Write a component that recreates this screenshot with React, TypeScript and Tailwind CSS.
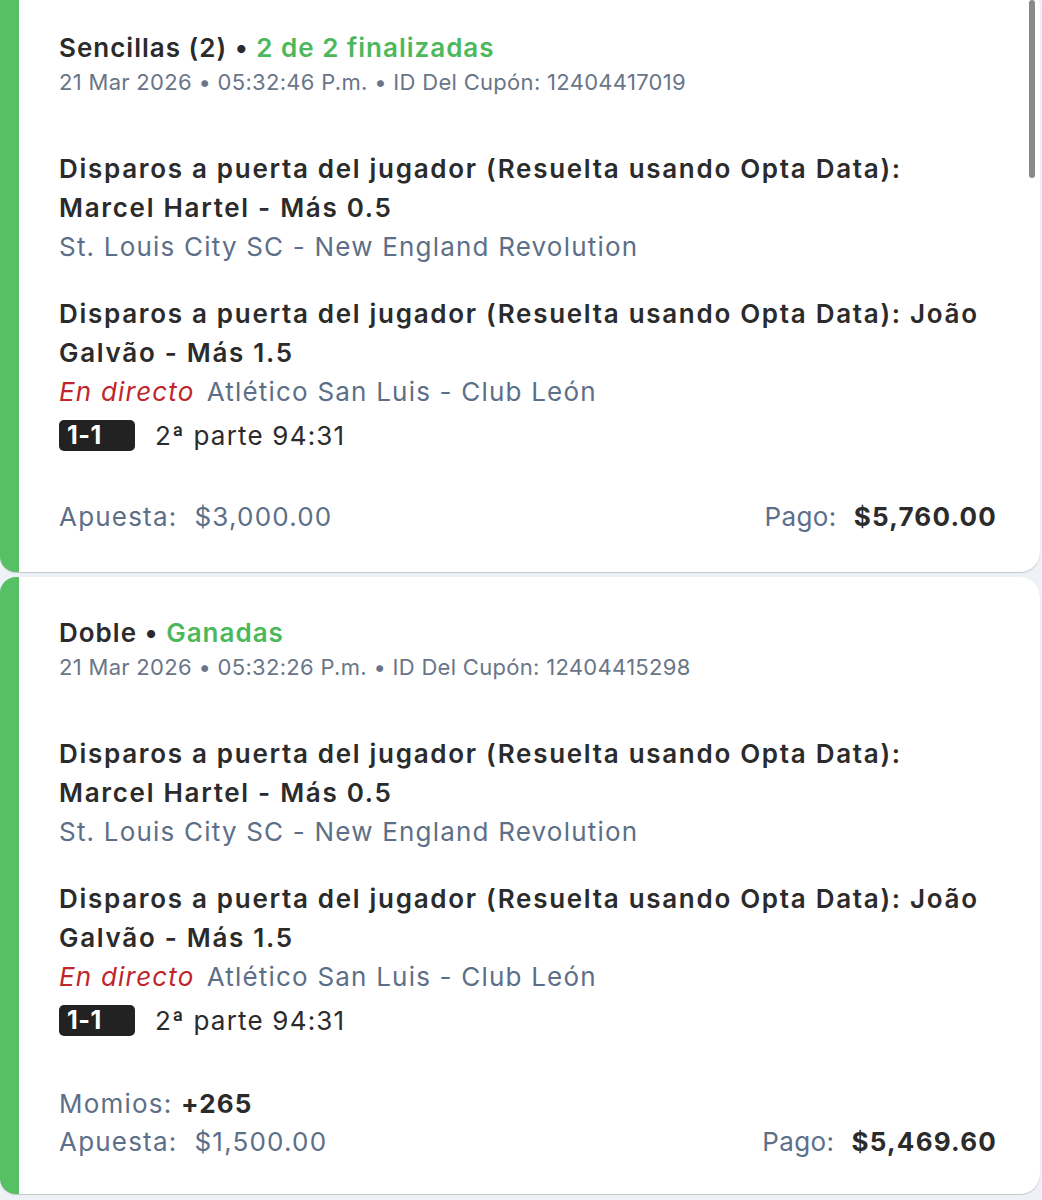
import React from "react";

type Leg = {
  title: string;
  match: string;
  live?: boolean;
  score?: string;
  period?: string;
};

type Coupon = {
  kind: string;
  status: string;
  date: string;
  couponId: string;
  legs: Leg[];
  odds?: string;
  stake: string;
  payout: string;
};

const legs: Leg[] = [
  {
    title: "Disparos a puerta del jugador (Resuelta usando Opta Data): Marcel Hartel - Más 0.5",
    match: "St. Louis City SC - New England Revolution",
  },
  {
    title: "Disparos a puerta del jugador (Resuelta usando Opta Data): João Galvão - Más 1.5",
    match: "Atlético San Luis - Club León",
    live: true,
    score: "1-1",
    period: "2ª parte 94:31",
  },
];

const coupons: Coupon[] = [
  {
    kind: "Sencillas (2)",
    status: "2 de 2 finalizadas",
    date: "21 Mar 2026 • 05:32:46 P.m.",
    couponId: "12404417019",
    legs,
    stake: "$3,000.00",
    payout: "$5,760.00",
  },
  {
    kind: "Doble",
    status: "Ganadas",
    date: "21 Mar 2026 • 05:32:26 P.m.",
    couponId: "12404415298",
    legs,
    odds: "+265",
    stake: "$1,500.00",
    payout: "$5,469.60",
  },
];

function LegRow({ leg }: { leg: Leg }) {
  return (
    <div className="flex flex-col">
      <p className="text-[26px] font-semibold leading-[39px] tracking-[1.7px] text-[#2b2b2b]">{leg.title}</p>
      <p className="text-[26px] leading-[39px] text-[#5d6f88]">
        {leg.live && <span className="mr-[12px] italic text-[#bf262c]">En directo</span>}
        {leg.match}
      </p>
      {leg.score && (
        <div className="mt-[9px] flex items-center gap-[20px]">
          <span className="flex h-[31px] w-[76px] items-center rounded-[5px] bg-[#222222] pl-[8px] text-[25px] font-bold tracking-[0.5px] text-white">
            {leg.score}
          </span>
          <span className="text-[26px] leading-[31px] text-[#2b2b2b]">{leg.period}</span>
        </div>
      )}
    </div>
  );
}

function CouponCard({ coupon, first }: { coupon: Coupon; first?: boolean }) {
  return (
    <div
      className={
        "mr-[2px] rounded-2xl rounded-r-[20px] border-l-[19px] border-[#55c064] bg-white pl-[40px] pr-[43px] shadow-[0_1px_1px_rgba(0,0,0,0.18)] " +
        (first ? "-mt-[14px] pt-[44px] pb-[36px]" : "pt-[38px] pb-[33px]")
      }
    >
      <p className="text-[26px] font-semibold leading-[35px] tracking-[1px] text-[#2b2b2b]">
        {coupon.kind} • <span className="text-[#4cb85c]">{coupon.status}</span>
      </p>
      <p className="text-[22px] leading-[35px] tracking-[0.3px] text-[#6a7588]">
        {coupon.date} • ID Del Cupón: {coupon.couponId}
      </p>

      <div className="mt-[49px] flex flex-col gap-[28px]">
        {coupon.legs.map((leg, i) => (
          <LegRow key={i} leg={leg} />
        ))}
      </div>

      <div className={"flex items-end justify-between " + (coupon.odds ? "mt-[49px]" : "mt-[47px]")}>
        <div className="flex flex-col text-[26px] leading-[38px] text-[#5d6f88]">
          {coupon.odds && (
            <p>
              Momios: <span className="font-bold text-[#2b2b2b]">{coupon.odds}</span>
            </p>
          )}
          <p>Apuesta:&nbsp; {coupon.stake}</p>
        </div>
        <p className="text-[26px] leading-[38px] text-[#5d6f88]">
          <span className="tracking-[0.4px]">Pago:</span>&nbsp; <span className="font-bold text-[#2b2b2b]">{coupon.payout}</span>
        </p>
      </div>
    </div>
  );
}

export default function App() {
  return (
    <div
      className="relative h-[1200px] w-[1042px] overflow-hidden bg-[#eef1f6] tracking-[1.2px]"
      style={{ fontFamily: "Inter, 'Noto Sans', sans-serif" }}
    >
      <div className="flex flex-col gap-[5px]">
        {coupons.map((c, i) => (
          <CouponCard key={i} coupon={c} first={i === 0} />
        ))}
      </div>
      <div className="absolute right-[7px] top-0 h-[178px] w-[6px] rounded-full bg-[#8a8a8a]" />
    </div>
  );
}
